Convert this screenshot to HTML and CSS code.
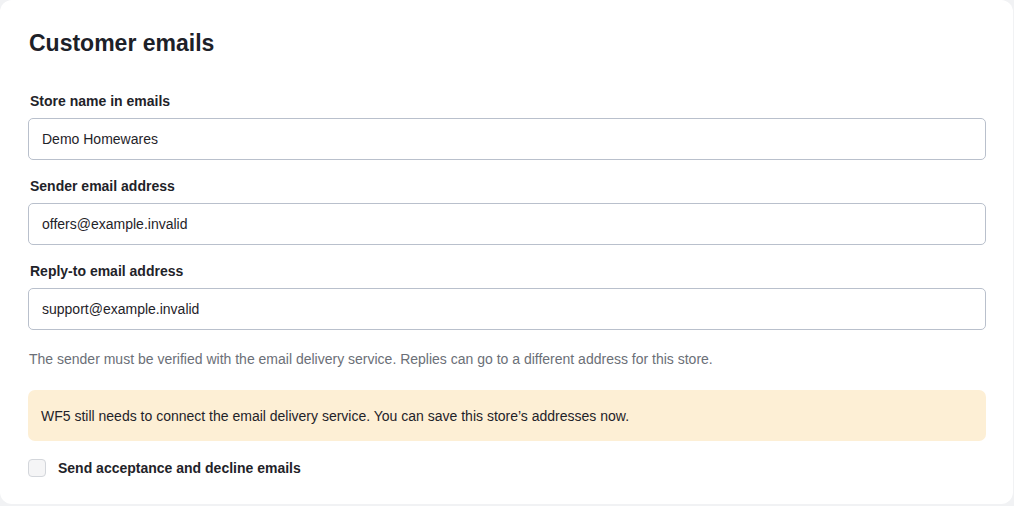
FILE: index.html
```html
<!DOCTYPE html>
<html lang="en">
<head>
<meta charset="utf-8">
<title>Customer emails</title>
<link rel="stylesheet" href="styles.css">
</head>
<body>
<section class="card">
  <h1 class="title">Customer emails</h1>
  <div class="field">
    <label class="label" for="store">Store name in emails</label>
    <input class="input" id="store" type="text" value="Demo Homewares">
  </div>
  <div class="field">
    <label class="label" for="sender">Sender email address</label>
    <input class="input" id="sender" type="text" value="offers@example.invalid">
  </div>
  <div class="field">
    <label class="label" for="reply">Reply-to email address</label>
    <input class="input" id="reply" type="text" value="support@example.invalid">
  </div>
  <p class="help">The sender must be verified with the email delivery service. Replies can go to a different address for this store.</p>
  <div class="notice">WF5 still needs to connect the email delivery service. You can save this store’s addresses now.</div>
  <label class="check">
    <span class="box"></span>
    <span class="check-label">Send acceptance and decline emails</span>
  </label>
</section>
</body>
</html>
```

FILE: styles.css
```css
* { box-sizing: border-box; }
html, body { margin: 0; padding: 0; }
body {
  background: #f1f2f4;
  font-family: "Liberation Sans", Arial, sans-serif;
  color: #1f2329;
  width: 1014px;
  height: 506px;
  overflow: hidden;
}
.card {
  width: 1013px;
  height: 504px;
  background: #ffffff;
  border-radius: 12px;
  padding: 28px 28px 0 28px;
  display: flex;
  flex-direction: column;
}
.title {
  margin: 0 0 0 1px;
  font-size: 23px;
  line-height: 30px;
  font-weight: 700;
  color: #1d2128;
}
.field {
  display: flex;
  flex-direction: column;
}
.field:first-of-type { margin-top: 35px; }
.field + .field { margin-top: 18px; }
.label {
  font-size: 14px;
  line-height: 17px;
  font-weight: 700;
  margin: 0 0 8px 2px;
  color: #1f2329;
}
.input {
  width: 958px;
  height: 42px;
  border: 1px solid #b9c0cc;
  border-radius: 5px;
  padding: 0 13px;
  font-family: "Liberation Sans", Arial, sans-serif;
  font-size: 14px;
  color: #1f2329;
  background: #fff;
  outline: none;
}
.help {
  margin: 20px 0 0 1px;
  font-size: 14px;
  line-height: 18px;
  color: #6b6f77;
}
.notice {
  margin-top: 22px;
  width: 958px;
  height: 51px;
  background: #fdefd5;
  border-radius: 7px;
  padding: 0 13px;
  display: flex;
  align-items: center;
  font-size: 14px;
  color: #1f2329;
}
.check {
  margin-top: 18px;
  display: flex;
  align-items: center;
  gap: 12px;
}
.box {
  width: 18px;
  height: 18px;
  border: 1px solid #d3d6db;
  border-radius: 4px;
  background: #f5f5f6;
}
.check-label {
  font-size: 14px;
  font-weight: 700;
  color: #1f2329;
}
```
